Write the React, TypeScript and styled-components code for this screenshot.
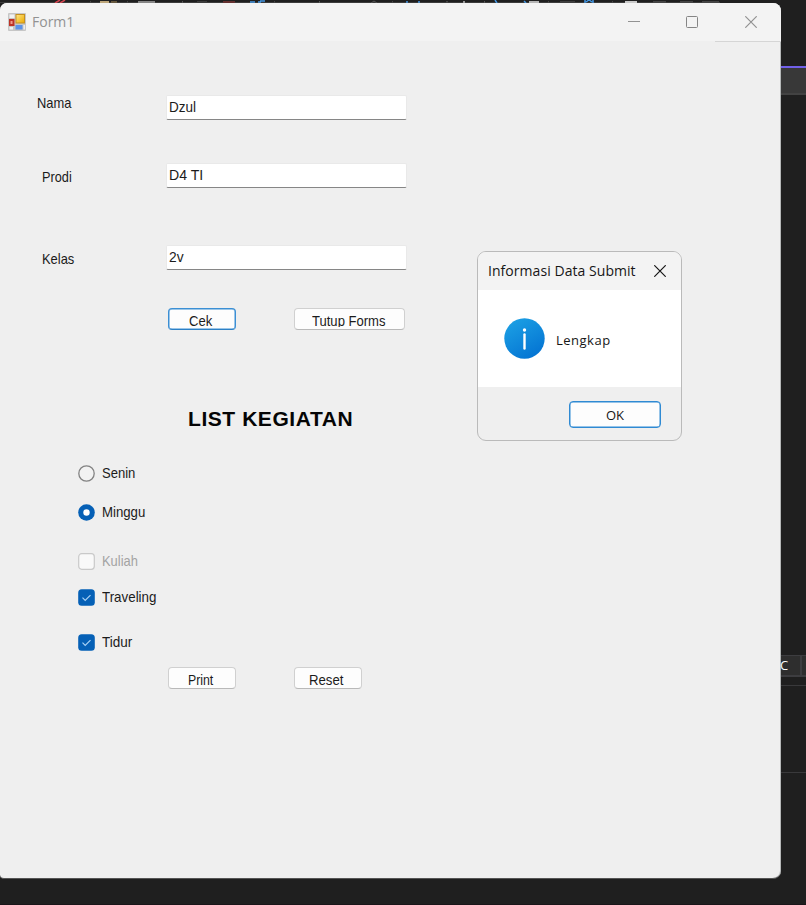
import React from "react";
import styled, { createGlobalStyle } from "styled-components";

const Global = createGlobalStyle`
  * { box-sizing: border-box; }
  html, body { margin: 0; background: #1f1f1f; overflow: hidden; }
`;

const Desktop = styled.div`
  position: relative;
  width: 806px;
  height: 905px;
  background: #1f1f1f;
  border-bottom: 1px solid #1a1519;
  overflow: hidden;
  font-family: "Liberation Sans", Arial, sans-serif;
`;

const ToolbarEdge = styled.svg`
  display: block;
  width: 806px;
  height: 3px;
`;

const Workspace = styled.div`
  display: flex;
  height: 876px;
`;

const Window = styled.main`
  width: 781px;
  flex: none;
  height: 876px;
  background: #efefef;
  border: solid #555;
  border-width: 0 0 1px 0;
  box-shadow: inset -1px 0 #b5b8b8;
  border-radius: 7px 8px 8px 4px;
  overflow: hidden;
`;

const TitleBar = styled.header`
  display: flex;
  align-items: center;
  height: 38px;
  padding-left: 8px;
  background: #f3f3f3;
`;

const TitleText = styled.span`
  margin-left: 6px;
  flex: 1;
  font: 14px/20px "Open Sans", "Noto Sans", sans-serif;
  color: #929292;
`;

const CaptionButton = styled.div<{ $w: number; $inset: number; $line?: boolean }>`
  display: flex;
  align-items: center;
  width: ${(p) => p.$w}px;
  padding-left: ${(p) => p.$inset}px;
  height: 39px;
  margin-top: 1px;
  border-bottom: 1px solid ${(p) => (p.$line ? "#d5d5d5" : "transparent")};
`;

const FormBody = styled.div`
  display: flex;
  flex-direction: column;
`;

const FieldRow = styled.div<{ $gap: number; $indent: number }>`
  display: flex;
  align-items: flex-start;
  height: 25px;
  margin-top: ${(p) => p.$gap}px;
  padding-left: ${(p) => p.$indent}px;
`;

const LabelCell = styled.div<{ $w: number; $drop: number }>`
  width: ${(p) => p.$w}px;
  flex: none;
  margin-top: ${(p) => p.$drop}px;
`;

const Text = styled.span<{ $scale: number; $color?: string }>`
  display: inline-block;
  font-size: 15px;
  line-height: 18px;
  white-space: pre;
  color: ${(p) => p.$color ?? "#1b1b1b"};
  transform: scaleX(${(p) => p.$scale});
  transform-origin: left center;
`;

const TextBox = styled.div`
  display: flex;
  align-items: center;
  width: 241px;
  height: 25px;
  padding: 0 0 1px 2px;
  background: #fff;
  border: 1px solid #e9e9e9;
  border-bottom: 1px solid #868686;
  border-radius: 2px;
`;

const ButtonRow = styled.div<{ $gap: number }>`
  display: flex;
  height: 22px;
  margin-top: ${(p) => p.$gap}px;
  padding-left: 168px;
  gap: 58px;
`;

const Button = styled.button<{ $w: number; $focus?: boolean; $inset: number; $drop?: number }>`
  width: ${(p) => p.$w}px;
  height: 22px;
  padding: ${(p) => p.$drop ?? 3}px 0 0 ${(p) => p.$inset}px;
  text-align: left;
  font-family: inherit;
  background: #fdfdfd;
  border: 1px solid ${(p) => (p.$focus ? "#3b8fd4" : "#d0d0d0")};
  border-bottom-color: ${(p) => (p.$focus ? "#2c80c6" : "#b9b9b9")};
  border-radius: 4px;
  box-shadow: ${(p) => (p.$focus ? "inset 0 0 0 0.5px #3b8fd4" : "none")};
`;

const ButtonLabel = styled.span<{ $clip?: boolean }>`
  display: block;
  height: 15px;
  overflow: ${(p) => (p.$clip ? "hidden" : "visible")};
`;

const Heading = styled.h1`
  margin: 76px 0 0 188px;
  height: 26px;
  font-size: 21px;
  line-height: 26px;
  font-weight: 700;
  white-space: nowrap;
  letter-spacing: 0.56px;
  color: #050505;
`;

const OptionRow = styled.label<{ $gap: number }>`
  display: flex;
  align-items: center;
  height: 18px;
  margin-top: ${(p) => p.$gap}px;
  padding-left: 78px;
  gap: 7px;
`;

const EditorEdge = styled.aside`
  width: 25px;
  flex: none;
  display: flex;
  flex-direction: column;
`;

const EditorTab = styled.div`
  height: 29px;
  margin-top: 63px;
  background: #383838;
  border-top: 2px solid #7160e8;
  border-bottom: 2px solid #424242;
`;

const StatusTab = styled.div`
  display: flex;
  height: 22px;
  margin-top: 560px;
  border: solid #3d3d40;
  border-width: 1px 0 2px;
  background: #2e2e2e;
`;

const StatusLetter = styled.span`
  width: 21px;
  height: 19px;
  border-right: 2px solid #3d3d40;
  font: 13px/19px "Open Sans", sans-serif;
  text-indent: -1px;
  color: #fafafa;
`;

const Divider = styled.div<{ $gap: number }>`
  height: 1px;
  margin-top: ${(p) => p.$gap}px;
  background: #39393b;
`;

const Dialog = styled.section`
  position: absolute;
  left: 477px;
  top: 251px;
  width: 205px;
  height: 190px;
  display: flex;
  flex-direction: column;
  background: #efefef;
  border: 1px solid #bababa;
  border-radius: 9px;
  overflow: hidden;
`;

const DialogTitle = styled.div`
  display: flex;
  align-items: center;
  justify-content: space-between;
  height: 38px;
  padding: 0 15px 0 10px;
  background: #f3f3f3;
  font: 14px/20px "Open Sans", "Noto Sans", sans-serif;
  color: #161616;
`;

const DialogCaption = styled.span<{ $track: number; $drop?: number }>`
  padding-top: ${(p) => p.$drop ?? 0}px;
  letter-spacing: ${(p) => p.$track}px;
  white-space: nowrap;
`;

const DialogMessage = styled.div`
  display: flex;
  align-items: center;
  gap: 11px;
  height: 97px;
  padding-left: 26px;
  background: #fff;
  font: 500 13px/16px "Open Sans", "Noto Sans", sans-serif;
  color: #161616;
`;

const DialogFooter = styled.div`
  display: flex;
  justify-content: flex-end;
  padding: 14px 20px 0 0;
`;

const OkButton = styled.button`
  width: 92px;
  height: 27px;
  padding: 0;
  background: #fdfdfd;
  border: 1.5px solid #2f8ad3;
  box-shadow: inset 0 0 0 0.5px #2f8ad3;
  border-radius: 4px;
  font: 500 13px/18px "Open Sans", "Noto Sans", sans-serif;
  color: #161616;
`;

const fragments: [number, number, string][] = [
  [90, 1, "#444"], [100, 9, "#bda67a"], [111, 6, "#66583e"], [127, 1, "#444"],
  [138, 17, "#858585"], [182, 1, "#555"], [197, 10, "#3b3b3b"], [223, 12, "#64302f"],
  [274, 1, "#444"], [319, 1, "#555"], [392, 1, "#444"], [446, 2, "#444"],
  [484, 1, "#555"], [529, 10, "#b5b5b5"], [548, 1, "#444"], [560, 15, "#3d3d3d"],
  [612, 1, "#444"], [625, 12, "#c9c9c9"], [653, 13, "#444"], [680, 13, "#444"],
  [702, 17, "#444"],
];

const AppIcon = () => (
  <svg width="18" height="18" viewBox="0 0 18 18">
    <defs>
      <linearGradient id="gold" x2="1" y2="1">
        <stop stopColor="#ffe887" />
        <stop offset="1" stopColor="#eca900" />
      </linearGradient>
    </defs>
    <rect width="18" height="18" rx="1" fill="#c6c6c6" />
    <path d="M1.5 1.5h5v3.500h-5zM1.500 14h3.500v2.500h-3.500z" fill="#f2f2f2" />
    <rect x="1" y="6" width="5.500" height="7" fill="#bd3327" />
    <rect x="2.500" y="8" width="2" height="3" fill="#ef9b8b" />
    <rect x="8" y="1.500" width="8.500" height="8.500" fill="url(#gold)" stroke="#c69121" />
    <rect x="7.500" y="12" width="7" height="4.500" fill="#5b92e8" />
    <path d="M15.500 12h1.500v4.500h-1.500z" fill="#eee" />
  </svg>
);

const Cross = ({ color }: { color: string }) => (
  <svg width="12" height="12" viewBox="0 0 12 12">
    <path d="M.3.3 11.700 11.700M11.700.3.3 11.700" stroke={color} strokeWidth="1.200" fill="none" />
  </svg>
);

const Radio = ({ on }: { on?: boolean }) => (
  <svg width="17" height="17" viewBox="0 0 17 17">
    {on ? (
      <>
        <circle cx="8.500" cy="8.500" r="8.300" fill="#0560b6" />
        <circle cx="8.500" cy="8.500" r="3.200" fill="#fff" />
      </>
    ) : (
      <circle cx="8.500" cy="8.500" r="7.700" fill="#f2f2f2" stroke="#828282" strokeWidth="1.300" />
    )}
  </svg>
);

const Check = ({ on }: { on?: boolean }) => (
  <svg width="17" height="17" viewBox="0 0 17 17">
    {on ? (
      <>
        <rect x=".2" y=".2" width="16.600" height="16.600" rx="3.500" fill="#0560b6" />
        <path d="m4.500 8.700 2.700 2.700 5.300-5.300" stroke="#a9d2f5" strokeWidth="1.200" fill="none" />
      </>
    ) : (
      <rect x=".7" y=".7" width="15.600" height="15.600" rx="3" fill="#f9f9f9" stroke="#c9c9c9" strokeWidth="1.200" />
    )}
  </svg>
);

const InfoIcon = () => (
  <svg width="41" height="41" viewBox="0 0 41 41">
    <defs>
      <linearGradient id="info" x1=".2" x2=".8" y2="1">
        <stop stopColor="#1ca0e4" />
        <stop offset="1" stopColor="#0372d2" />
      </linearGradient>
    </defs>
    <circle cx="20.500" cy="20.500" r="20.200" fill="url(#info)" />
    <circle cx="20.500" cy="12" r="1.700" fill="#fff" />
    <path d="M20.500 16.500v14" stroke="#fff" strokeWidth="2.400" strokeLinecap="round" />
  </svg>
);

export default function App() {
  return (
    <Desktop>
      <Global />
      <ToolbarEdge viewBox="0 0 806 3">
        <rect y="2" width="720" height="1" fill="#3c3c3c" />
        {fragments.map(([x, w, fill]) => (
          <rect key={x} x={x} y="1" width={w} height="2" fill={fill} />
        ))}
        <path d="m55 3 5-3m0 3 5-3" stroke="#d64550" strokeWidth="1.500" />
        <path d="M250 2h5m3 0h3m-1-1h5M406 2h2m10 0h2M495 0l2 3M524 1l2 2M585 0v3m1-1 3-2 3 2m1-2v3" stroke="#4598e3" strokeWidth="1.500" fill="none" />
        <path d="m371 3 3-2 3 2" stroke="#555" fill="none" />
        <rect x="463" y="1" width="2" height="2" fill="#999" />
      </ToolbarEdge>
      <Workspace>
        <Window>
          <TitleBar>
            <AppIcon />
            <TitleText>Form1</TitleText>
            <CaptionButton $w={44} $inset={16}>
              <svg width="12" height="12"><path d="M0 5.500h12" stroke="#929292" /></svg>
            </CaptionButton>
            <CaptionButton $w={59} $inset={30}>
              <svg width="12" height="12"><rect x=".5" y=".5" width="11" height="11" rx="1" fill="none" stroke="#858585" /></svg>
            </CaptionButton>
            <CaptionButton $w={66} $inset={30} $line>
              <Cross color="#929292" />
            </CaptionButton>
          </TitleBar>
          <FormBody>
            <FieldRow $gap={54} $indent={37}>
              <LabelCell $w={129} $drop={-1}><Text $scale={0.86}>Nama</Text></LabelCell>
              <TextBox><Text $scale={0.9}>Dzul</Text></TextBox>
            </FieldRow>
            <FieldRow $gap={43} $indent={42}>
              <LabelCell $w={124} $drop={5}><Text $scale={0.85}>Prodi</Text></LabelCell>
              <TextBox><Text $scale={0.94}>D4 TI</Text></TextBox>
            </FieldRow>
            <FieldRow $gap={57} $indent={42}>
              <LabelCell $w={124} $drop={5}><Text $scale={0.86}>Kelas</Text></LabelCell>
              <TextBox><Text $scale={0.92}>2v</Text></TextBox>
            </FieldRow>
            <ButtonRow $gap={38}>
              <Button $w={68} $focus $inset={20} $drop={0}><ButtonLabel><Text $scale={0.87}>Cek</Text></ButtonLabel></Button>
              <Button $w={111} $inset={17} $drop={0}><ButtonLabel $clip><Text $scale={0.87}>Tutup Forms</Text></ButtonLabel></Button>
            </ButtonRow>
            <Heading>LIST KEGIATAN</Heading>
            <OptionRow $gap={32}><Radio /><Text $scale={0.87}>Senin</Text></OptionRow>
            <OptionRow $gap={21}><Radio on /><Text $scale={0.88}>Minggu</Text></OptionRow>
            <OptionRow $gap={31}><Check /><Text $scale={0.86} $color="#a3a3a3">Kuliah</Text></OptionRow>
            <OptionRow $gap={18}><Check on /><Text $scale={0.89}>Traveling</Text></OptionRow>
            <OptionRow $gap={27}><Check on /><Text $scale={0.9}>Tidur</Text></OptionRow>
            <ButtonRow $gap={16}>
              <Button $w={68} $inset={19}><Text $scale={0.82}>Print</Text></Button>
              <Button $w={68} $inset={14}><Text $scale={0.88}>Reset</Text></Button>
            </ButtonRow>
          </FormBody>
        </Window>
        <EditorEdge>
          <EditorTab />
          <StatusTab><StatusLetter>C</StatusLetter></StatusTab>
          <Divider $gap={8} />
          <Divider $gap={86} />
        </EditorEdge>
      </Workspace>
      <Dialog role="dialog">
        <DialogTitle>
          <DialogCaption $track={0.05}>Informasi Data Submit</DialogCaption>
          <Cross color="#161616" />
        </DialogTitle>
        <DialogMessage><InfoIcon /><DialogCaption $track={0.5} $drop={2}>Lengkap</DialogCaption></DialogMessage>
        <DialogFooter><OkButton>OK</OkButton></DialogFooter>
      </Dialog>
    </Desktop>
  );
}
